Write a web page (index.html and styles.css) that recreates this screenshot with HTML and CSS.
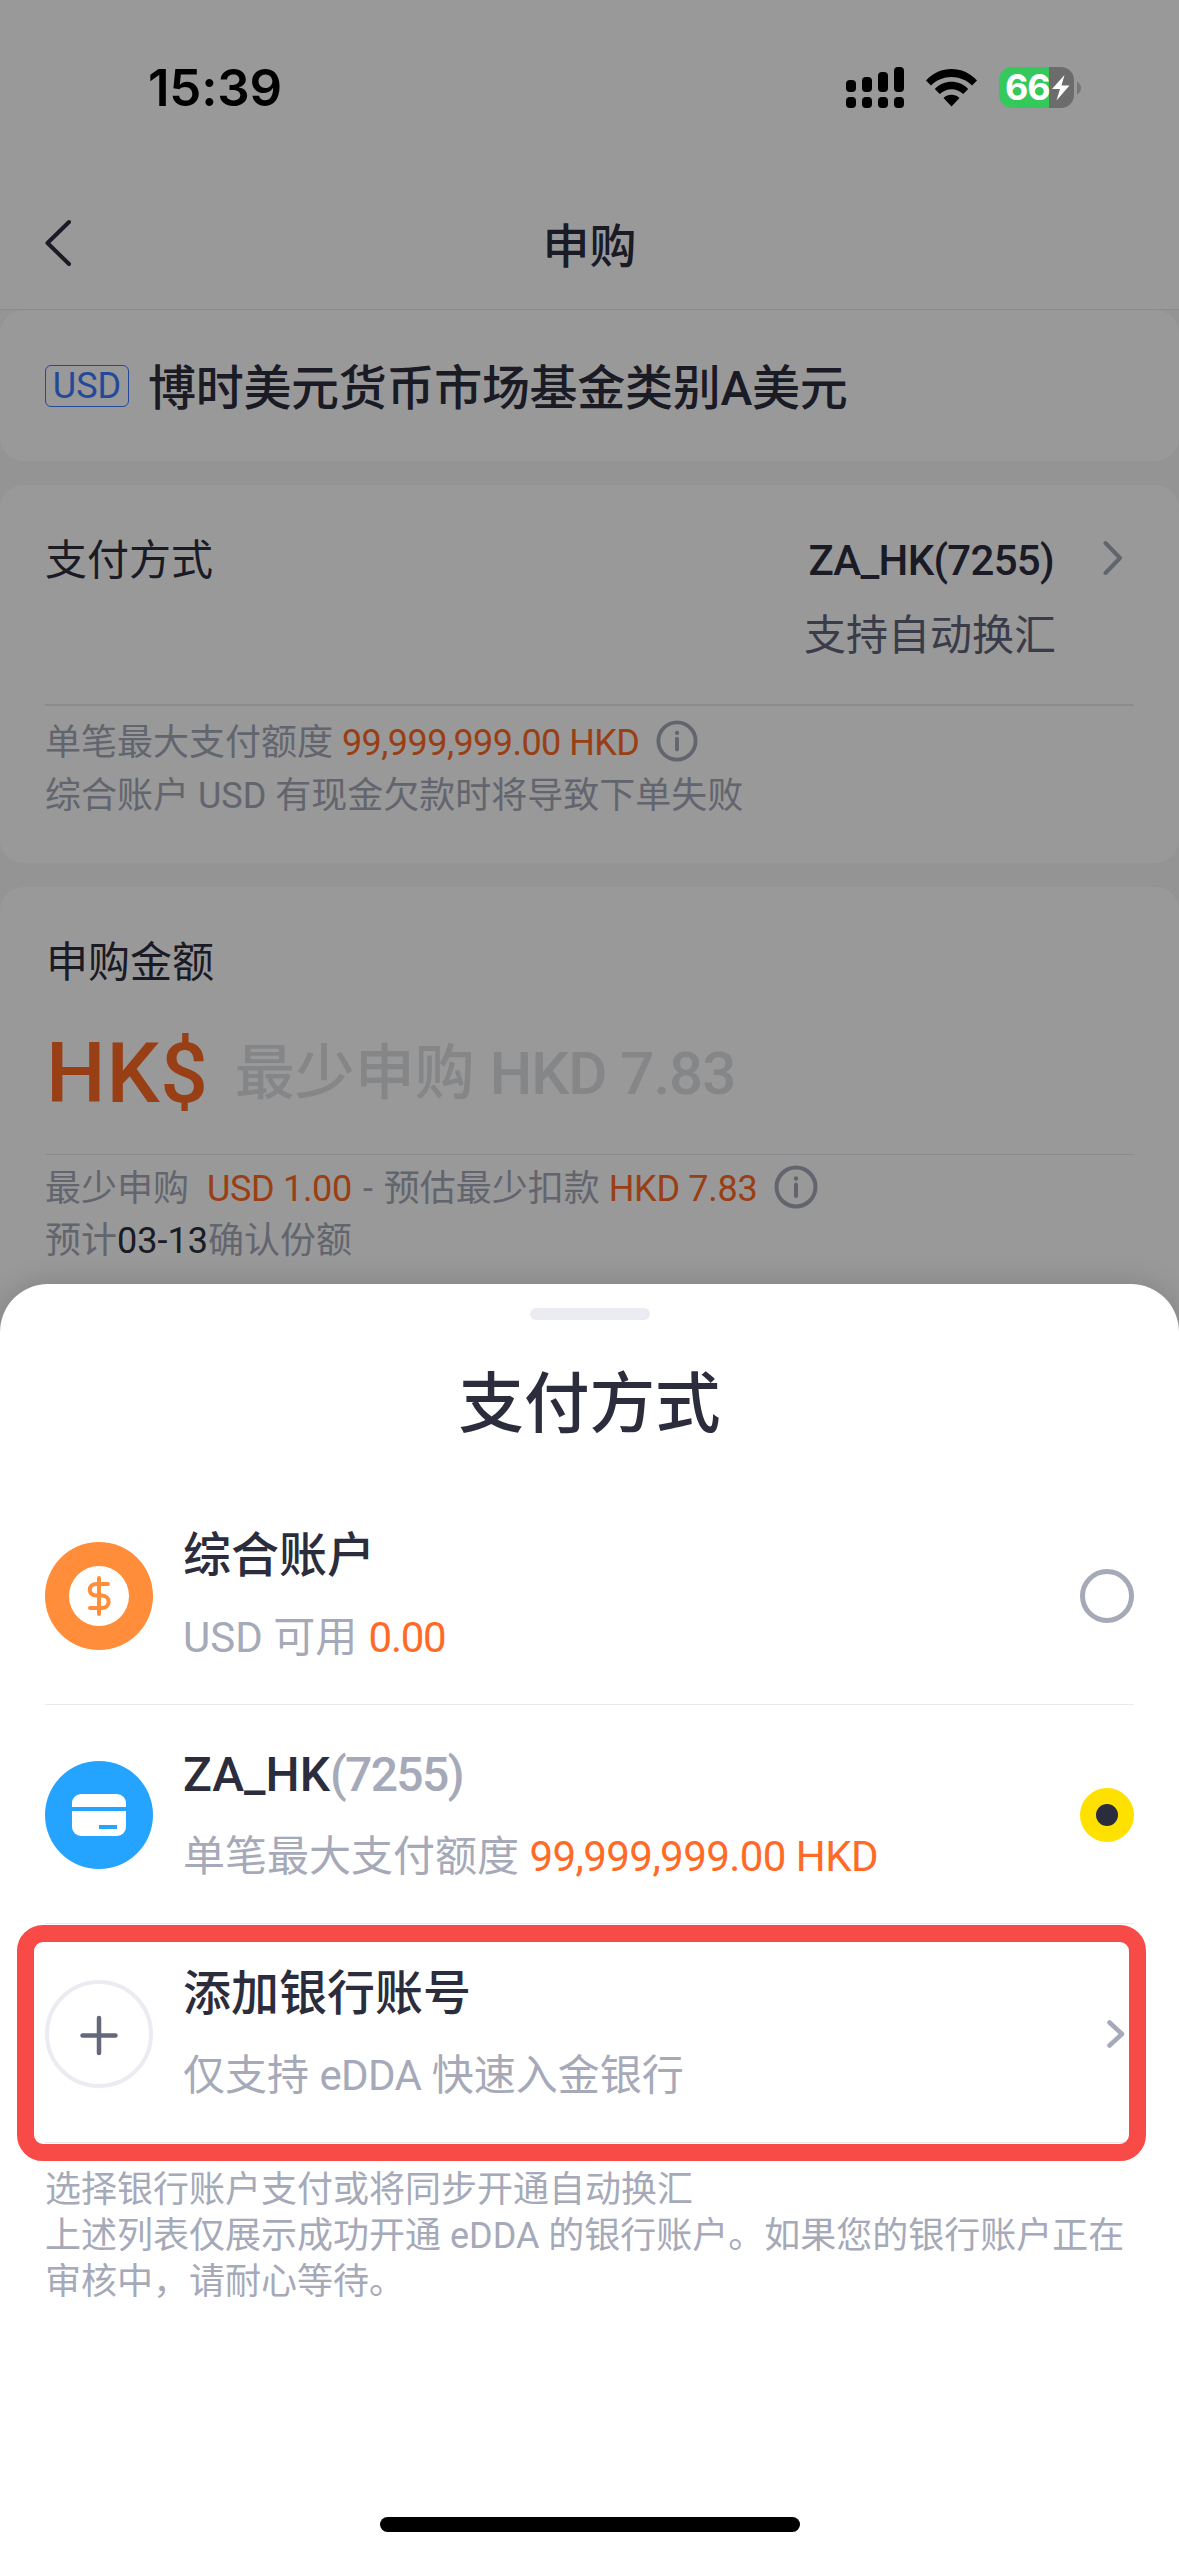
FILE: index.html
```html
<!DOCTYPE html>
<html lang="zh-CN">
<head>
<meta charset="utf-8">
<title>申购</title>
<link rel="stylesheet" href="styles.css">
</head>
<body>
<div class="screen">
  <header class="nav">
    <svg class="back" width="28" height="48" viewBox="0 0 28 48"><path d="M25 3 3.500 24 25 45" fill="none" stroke="#2c2d3c" stroke-width="4" stroke-linecap="round" stroke-linejoin="round"/></svg>
    <h1 class="nav-title">申购</h1>
  </header>

  <main class="content">
    <section class="card fund">
      <span class="tag">USD</span>
      <span class="fund-name">博时美元货币市场基金类别A美元</span>
    </section>

    <section class="card pay">
      <div class="pay-row">
        <span>支付方式</span>
        <span class="pay-value"><b class="account">ZA_HK(7255)</b><svg class="chevron" width="20" height="36" viewBox="0 0 20 36"><path d="M2.500 3 17 18 2.500 33" fill="none" stroke="#a5a9b8" stroke-width="4" stroke-linecap="round" stroke-linejoin="round"/></svg></span>
      </div>
      <div class="pay-sub">支持自动换汇</div>
      <div class="rule thick"></div>
      <div class="hint hint-pay">
        <div class="hint-line"><span>单笔最大支付额度 <i class="hot limit">99,999,999.00 HKD</i></span>
          <svg class="info" width="42" height="42" viewBox="0 0 44 44"><circle cx="22" cy="22" r="19.500" fill="none" stroke="currentColor" stroke-width="4"/><circle cx="22" cy="13.500" r="2.200" fill="currentColor"/><path d="M22 19.500V31" stroke="currentColor" stroke-width="4" stroke-linecap="round"/></svg>
        </div>
        <div class="hint-line">综合账户&nbsp;<span class="latin">USD</span>&nbsp;有现金欠款时将导致下单失败</div>
      </div>
    </section>

    <section class="card amount">
      <div class="amount-label">申购金额</div>
      <div class="amount-input"><span class="currency">HK$</span><span class="placeholder">最少申购 <span class="ph-num">HKD 7.83</span></span></div>
      <div class="rule"></div>
      <div class="hint hint-amount">
        <div class="hint-line"><span>最少申购&nbsp; <i class="hot usd-min">USD 1.00</i> <span class="dash">-</span> 预估最少扣款 <i class="hot hkd-min">HKD 7.83</i></span>
          <svg class="info" width="44" height="44" viewBox="0 0 44 44"><circle cx="22" cy="22" r="19.500" fill="none" stroke="currentColor" stroke-width="4"/><circle cx="22" cy="13.500" r="2.200" fill="currentColor"/><path d="M22 19.500V31" stroke="currentColor" stroke-width="4" stroke-linecap="round"/></svg>
        </div>
        <div class="hint-line"><span>预计<span class="date">03-13</span>确认份额</span></div>
      </div>
    </section>
  </main>

  <div class="backdrop"></div>

  <div class="status">
    <span class="time">15:39</span>
    <div class="status-icons">
      <svg width="58" height="41" viewBox="0 0 58 41"><g fill="#000"><rect x="0" y="13" width="10" height="12" rx="4"/><rect x="16" y="10" width="10" height="15" rx="4"/><rect x="32" y="5" width="10" height="20" rx="4"/><rect x="48" y="0" width="10" height="25" rx="4"/><rect x="0" y="30" width="10" height="11" rx="4"/><rect x="16" y="30" width="10" height="11" rx="4"/><rect x="32" y="30" width="10" height="11" rx="4"/><rect x="48" y="30" width="10" height="11" rx="4"/></g></svg>
      <svg class="wifi" width="51" height="38" viewBox="0 0 51 38"><path d="M0 11.500C14-3.800 37-3.800 51 11.500L46 16.500C35 5 16 5 5 16.500ZM8.800 20C18 10.300 33 10.300 42.200 20L37.200 25C30.500 18.500 20.500 18.500 13.800 25ZM17.500 29C22 24.600 29 24.600 33.500 29L25.500 37.500Z" fill="#000"/></svg>
      <div class="battery">
        <span class="level">66</span>
        <svg class="bolt" width="18" height="26" viewBox="0 0 18 26"><path d="M12.500 0 0 14H8L4.500 25.500 17.500 10.500H9.500Z" fill="#fff"/></svg>
      </div>
      <svg width="5" height="14" viewBox="0 0 5 14"><path d="M1 0.500Q5 3 5 7T1 13.500Z" fill="#777"/></svg>
    </div>
  </div>

  <section class="sheet">
    <div class="handle"></div>
    <h2 class="sheet-title">支付方式</h2>

    <div class="option">
      <svg class="avatar" width="108" height="108" viewBox="0 0 108 108"><circle cx="54" cy="54" r="54" fill="#ff8d3a"/><circle cx="54" cy="54" r="30" fill="#fff"/><path d="M54 36V72M63 42H51.500C42.500 42 42.500 53.500 51.500 53.500H56.500C66 53.500 66 66 56.500 66H45" fill="none" stroke="#ff8d3a" stroke-width="4" stroke-linecap="round"/></svg>
      <div class="option-text">
        <div class="option-name">综合账户</div>
        <div class="option-sub">USD 可用 <i class="hot zero">0.00</i></div>
      </div>
      <span class="radio"></span>
    </div>

    <div class="option">
      <svg class="avatar" width="108" height="108" viewBox="0 0 108 108"><circle cx="54" cy="54" r="54" fill="#24a3ff"/><rect x="27" y="33" width="54" height="42" rx="9" fill="#fff"/><path d="M27 48H81M54 66H72" stroke="#24a3ff" stroke-width="4"/></svg>
      <div class="option-text">
        <div class="option-name">ZA_HK<span class="tail">(7255)</span></div>
        <div class="option-sub">单笔最大支付额度 <i class="hot limit">99,999,999.00 HKD</i></div>
      </div>
      <span class="radio checked"></span>
    </div>

    <div class="option">
      <svg class="avatar" width="108" height="108" viewBox="0 0 108 108"><circle cx="54" cy="54" r="52" fill="#fff" stroke="#ebebf2" stroke-width="4"/><path d="M54 38V73M37.500 55.500H70.500" stroke="#65677d" stroke-width="4.500" stroke-linecap="round"/></svg>
      <div class="option-text">
        <div class="option-name">添加银行账号</div>
        <div class="option-sub">仅支持 <span class="edda">eDDA</span> 快速入金银行</div>
      </div>
      <svg class="go" width="18" height="28" viewBox="0 0 18 28"><path d="M2.500 2.500 15 14 2.500 25.500" fill="none" stroke="#a5a9b8" stroke-width="4.500" stroke-linecap="round" stroke-linejoin="round"/></svg>
      <div class="highlight"></div>
    </div>

    <p class="note">选择银行账户支付或将同步开通自动换汇<br>上述列表仅展示成功开通 eDDA 的银行账户。如果您的银行账户正在<br>审核中，请耐心等待。</p>
    <div class="home"></div>
  </section>
</div>
</body>
</html>
```

FILE: styles.css
```css
* { box-sizing: border-box; margin: 0; padding: 0; }

body {
  width: 1179px;
  height: 2556px;
  overflow: hidden;
  font-family: Roboto, "Noto Sans CJK SC", sans-serif;
  color: #2c2d3c;
}

svg { display: block; flex: none; }
i { font-style: normal; }

.screen {
  position: relative;
  width: 1179px;
  height: 2556px;
  overflow: hidden;
  background: #f7f7f8;
}

/* status bar */
.status {
  position: absolute;
  top: 0;
  left: 0;
  width: 100%;
  height: 177px;
  padding: 67px 98px 0 148px;
  display: flex;
  justify-content: space-between;
  align-items: flex-start;
}
.time {
  font: 600 51px/42px Inter, sans-serif;
  color: #000;
  letter-spacing: -0.2px;
}
.status-icons { display: flex; align-items: center; }
.wifi { margin: 0 22px; }
.battery {
  width: 75px;
  height: 41px;
  margin-right: 2px;
  padding-left: 6px;
  display: flex;
  align-items: center;
  gap: 3px;
  border-radius: 13px;
  background: linear-gradient(90deg, #34c95a 50px, #6c6c6c 50px);
}
.level {
  width: 44px;
  font: 700 36px/41px Inter, sans-serif;
  color: #fff;
  letter-spacing: -1.2px;
}

/* navigation */
.nav {
  height: 310px;
  padding: 177px 44px 0;
  display: grid;
  grid-template-columns: 1fr auto 1fr;
  align-items: center;
  background: #fff;
  border-bottom: 1px solid #e9e9ee;
}
.nav-title { font-size: 47px; font-weight: 500; line-height: 72px; padding-top: 8px; }

/* cards */
.content { display: flex; flex-direction: column; gap: 24px; }
.card { padding: 0 45px; background: #fff; border-radius: 24px; }

.fund { height: 151px; display: flex; align-items: center; gap: 19px; }
.tag {
  width: 84px;
  height: 42px;
  border: 1px solid #3e7aff;
  border-radius: 6px;
  color: #3e7aff;
  font-size: 36px;
  line-height: 41px;
  text-align: center;
}
.fund-name { font-size: 48px; font-weight: 500; line-height: 72px; padding-top: 6px; letter-spacing: -0.3px; }

.pay { height: 378px; padding-top: 38px; font-size: 42px; line-height: 75px; }
.pay-row { display: flex; justify-content: space-between; }
.pay-value { display: flex; align-items: center; gap: 49px; padding-right: 11px; }
.account { font-weight: 500; letter-spacing: -0.7px; line-height: 73px; }
.chevron { margin-bottom: 6px; }
.pay-sub { text-align: right; padding-right: 78px; color: #62657a; }
.rule { height: 1px; background: #e9e9ee; }
.rule.thick { height: 2px; margin-top: 31px; }

.hint { font-size: 36px; color: #a5a9b8; }
.hint-line { display: flex; align-items: center; }
.hint-pay { line-height: 53px; padding-top: 11px; }
.hint-amount { line-height: 52px; padding-top: 8px; }
.info { margin: 0 0 5px 17px; }
.hot { color: #ff6a26; }
.limit { letter-spacing: -0.55px; }
.usd-min, .hkd-min { letter-spacing: -0.3px; }
.zero { padding-left: 1px; letter-spacing: -1.3px; }
.dash { padding: 0 2px; }
.date { color: #2c2d3c; }

.amount { height: 500px; padding-top: 38px; }
.amount-label { font-size: 42px; line-height: 75px; padding-left: 1px; }
.amount-input { display: flex; align-items: center; gap: 26px; margin: 29px 0 35px; height: 90px; line-height: 90px; font-weight: 500; }
.currency { padding-left: 1px; font-size: 84px; color: #ff6a26; letter-spacing: 0.8px; }
.placeholder { font-size: 60px; color: #dedfe3; }
.ph-num { letter-spacing: -1px; }

/* dimmed layer and bottom sheet */
.backdrop { position: absolute; inset: 0; background: rgba(0, 0, 0, 0.4); }

.sheet {
  position: absolute;
  left: 0;
  right: 0;
  top: 1284px;
  bottom: 0;
  padding: 24px 45px;
  background: #fff;
  border-radius: 48px 48px 0 0;
  box-shadow: 0 0 30px rgba(0, 0, 0, 0.16);
  display: flex;
  flex-direction: column;
}
.handle { width: 120px; height: 12px; border-radius: 6px; background: #ebebf2; align-self: center; }
.sheet-title { margin: 40px 0 36px; font-size: 65.500px; font-weight: 500; line-height: 90px; text-align: center; }

.option {
  position: relative;
  height: 219px;
  flex: none;
  display: flex;
  align-items: center;
  padding-top: 2px;
  border-bottom: 1px solid #e9e9ee;
}
.option-text { flex: 1; padding: 2px 0 0 30px; line-height: 82px; }
.option-name { font-size: 48px; font-weight: 500; }
.option-sub { font-size: 42px; color: #a5a9b8; }
.tail { color: #a5a9b8; letter-spacing: -1.6px; }
.edda { letter-spacing: -0.6px; }
.radio { width: 54px; height: 54px; border: 5px solid #a5a9b8; border-radius: 50%; }
.radio.checked { border: 16px solid #ffe100; background: #2c2d3c; }
.go { margin-right: 9px; }
.highlight {
  position: absolute;
  left: -28px;
  right: -12px;
  top: 1px;
  height: 236px;
  border: 17px solid #f84b47;
  border-radius: 26px;
}

.note { margin-top: 24px; font-size: 36px; line-height: 46px; color: #a5a9b8; white-space: nowrap; }
.home { width: 420px; height: 15px; margin-top: auto; border-radius: 8px; background: #000; align-self: center; }
```
